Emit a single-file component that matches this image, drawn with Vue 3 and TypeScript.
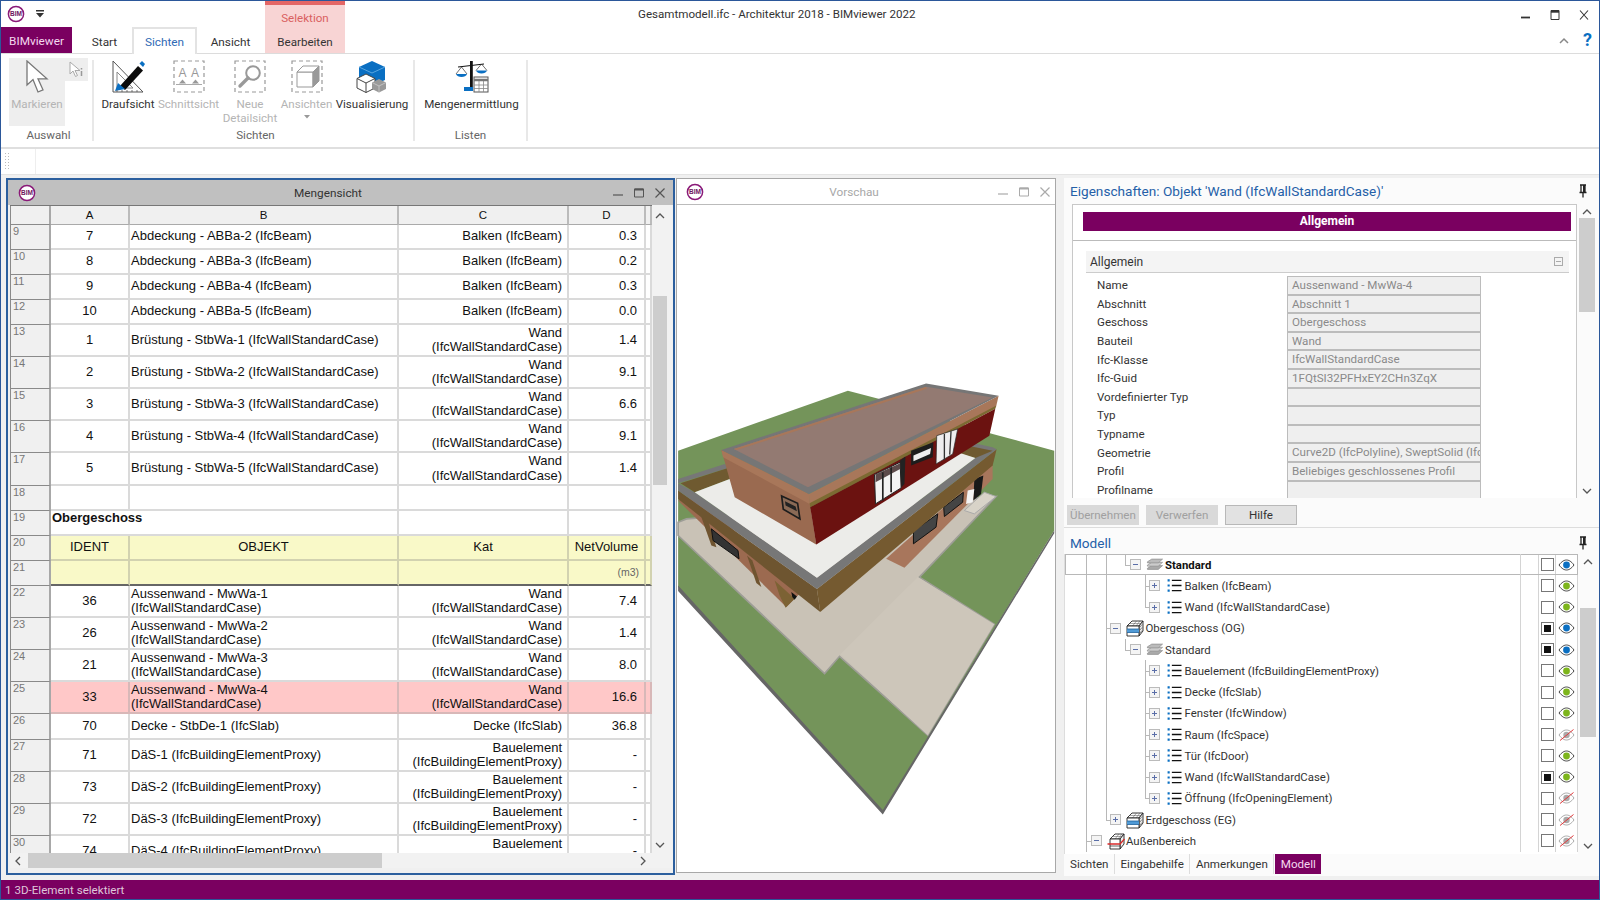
<script setup lang="ts">
interface SheetRow {
  n: number;
  a?: string;
  b?: string;
  c?: string;
  d?: string;
  h: number;
  kind?: "title" | "yellow" | "unit" | "hit";
}

interface TreeRow {
  depth: number;
  label: string;
  icon: "layer" | "list" | "storey" | "site";
  open?: boolean;
  bold?: boolean;
  selected?: boolean;
  checked?: boolean;
  eye: "blue" | "green" | "off";
  last?: boolean;
}

const wandC = "Wand\n(IfcWallStandardCase)";
const proxyC = "Bauelement\n(IfcBuildingElementProxy)";

const sheetRows: SheetRow[] = [
  { n: 9, a: "7", b: "Abdeckung - ABBa-2 (IfcBeam)", c: "Balken (IfcBeam)", d: "0.3", h: 25 },
  { n: 10, a: "8", b: "Abdeckung - ABBa-3 (IfcBeam)", c: "Balken (IfcBeam)", d: "0.2", h: 25 },
  { n: 11, a: "9", b: "Abdeckung - ABBa-4 (IfcBeam)", c: "Balken (IfcBeam)", d: "0.3", h: 25 },
  { n: 12, a: "10", b: "Abdeckung - ABBa-5 (IfcBeam)", c: "Balken (IfcBeam)", d: "0.0", h: 25 },
  { n: 13, a: "1", b: "Brüstung - StbWa-1 (IfcWallStandardCase)", c: wandC, d: "1.4", h: 32 },
  { n: 14, a: "2", b: "Brüstung - StbWa-2 (IfcWallStandardCase)", c: wandC, d: "9.1", h: 32 },
  { n: 15, a: "3", b: "Brüstung - StbWa-3 (IfcWallStandardCase)", c: wandC, d: "6.6", h: 32 },
  { n: 16, a: "4", b: "Brüstung - StbWa-4 (IfcWallStandardCase)", c: wandC, d: "9.1", h: 32 },
  { n: 17, a: "5", b: "Brüstung - StbWa-5 (IfcWallStandardCase)", c: wandC, d: "1.4", h: 33 },
  { n: 18, h: 25 },
  { n: 19, a: "Obergeschoss", h: 25, kind: "title" },
  { n: 20, a: "IDENT", b: "OBJEKT", c: "Kat", d: "NetVolume", h: 25, kind: "yellow" },
  { n: 21, d: "(m3)", h: 25, kind: "unit" },
  { n: 22, a: "36", b: "Aussenwand - MwWa-1\n(IfcWallStandardCase)", c: wandC, d: "7.4", h: 32 },
  { n: 23, a: "26", b: "Aussenwand - MwWa-2\n(IfcWallStandardCase)", c: wandC, d: "1.4", h: 32 },
  { n: 24, a: "21", b: "Aussenwand - MwWa-3\n(IfcWallStandardCase)", c: wandC, d: "8.0", h: 32 },
  { n: 25, a: "33", b: "Aussenwand - MwWa-4\n(IfcWallStandardCase)", c: wandC, d: "16.6", h: 32, kind: "hit" },
  { n: 26, a: "70", b: "Decke - StbDe-1 (IfcSlab)", c: "Decke (IfcSlab)", d: "36.8", h: 26 },
  { n: 27, a: "71", b: "DäS-1 (IfcBuildingElementProxy)", c: proxyC, d: "-", h: 32 },
  { n: 28, a: "73", b: "DäS-2 (IfcBuildingElementProxy)", c: proxyC, d: "-", h: 32 },
  { n: 29, a: "72", b: "DäS-3 (IfcBuildingElementProxy)", c: proxyC, d: "-", h: 32 },
  { n: 30, a: "74", b: "DäS-4 (IfcBuildingElementProxy)", c: proxyC, d: "-", h: 32 },
];

const props: [string, string][] = [
  ["Name", "Aussenwand - MwWa-4"],
  ["Abschnitt", "Abschnitt 1"],
  ["Geschoss", "Obergeschoss"],
  ["Bauteil", "Wand"],
  ["Ifc-Klasse", "IfcWallStandardCase"],
  ["Ifc-Guid", "1FQtSI32PFHxEY2CHn3ZqX"],
  ["Vordefinierter Typ", ""],
  ["Typ", ""],
  ["Typname", ""],
  ["Geometrie", "Curve2D (IfcPolyline), SweptSolid (IfcExtrudedAreaSolid)"],
  ["Profil", "Beliebiges geschlossenes Profil"],
  ["Profilname", ""],
];

const treeRows: TreeRow[] = [
  { depth: 2, label: "Standard", icon: "layer", open: true, bold: true, selected: true, eye: "blue", last: true },
  { depth: 3, label: "Balken (IfcBeam)", icon: "list", eye: "green" },
  { depth: 3, label: "Wand (IfcWallStandardCase)", icon: "list", eye: "green", last: true },
  { depth: 1, label: "Obergeschoss (OG)", icon: "storey", open: true, checked: true, eye: "blue" },
  { depth: 2, label: "Standard", icon: "layer", open: true, checked: true, eye: "blue", last: true },
  { depth: 3, label: "Bauelement (IfcBuildingElementProxy)", icon: "list", eye: "green" },
  { depth: 3, label: "Decke (IfcSlab)", icon: "list", eye: "green" },
  { depth: 3, label: "Fenster (IfcWindow)", icon: "list", eye: "green" },
  { depth: 3, label: "Raum (IfcSpace)", icon: "list", eye: "off" },
  { depth: 3, label: "Tür (IfcDoor)", icon: "list", eye: "green" },
  { depth: 3, label: "Wand (IfcWallStandardCase)", icon: "list", checked: true, eye: "green" },
  { depth: 3, label: "Öffnung (IfcOpeningElement)", icon: "list", eye: "off", last: true },
  { depth: 1, label: "Erdgeschoss (EG)", icon: "storey", eye: "off", last: true },
  { depth: 0, label: "Außenbereich", icon: "site", open: true, eye: "off" },
];

const levelX = (level: number) => 21 + level * 19.5;
const guides = (depth: number) => (depth === 0 ? [] : depth === 1 ? [0] : [0, 1]);
const eyeColor: Record<string, string> = { blue: "#0a6fc2", green: "#7db51c" };
</script>

<template>
  <div class="app">
    <svg class="defs" aria-hidden="true">
      <symbol id="bim" viewBox="0 0 18 18">
        <circle cx="9" cy="9" r="7.6" fill="#fff" stroke="#8a1a78" stroke-width="1.5" />
        <text x="9" y="11.3" text-anchor="middle" font-size="6.5" font-weight="700" font-family="Liberation Sans, sans-serif" fill="#6d1560">BIM</text>
      </symbol>
      <symbol id="pin" viewBox="0 0 12 14">
        <path d="M3 1h6M4 1v7M8 1v7M2.5 8.5h7M6 9v4.5" fill="none" stroke="#222" stroke-width="1.3" />
        <rect x="6" y="1" width="2" height="7" fill="#222" />
      </symbol>
      <symbol id="eye" viewBox="0 0 17 12">
        <path d="M1 6C4 2 6.500 1 8.500 1S13 2 16 6c-3 4-5.500 5-7.500 5S4 10 1 6Z" fill="#fff" stroke="#444" stroke-width="1" />
        <circle cx="8.500" cy="6" r="3.400" fill="currentColor" />
      </symbol>
      <symbol id="eye-off" viewBox="0 0 17 12">
        <path d="M1 6C4 2 6.500 1 8.500 1S13 2 16 6c-3 4-5.500 5-7.500 5S4 10 1 6Z" fill="#fff" stroke="#aaa" stroke-width="1" />
        <circle cx="8.500" cy="6" r="3.200" fill="#aaa" />
        <path d="M2 11.500 15.500 .5" stroke="#e0383a" stroke-width="1" />
      </symbol>
      <symbol id="list" viewBox="0 0 14 14">
        <path d="M1 1.200h2v2H1zM1 6h2v2H1zM1 10.800h2v2H1z" fill="#0a6fc2" />
        <path d="M5 2.200h9M5 7h9M5 11.800h9" stroke="#111" stroke-width="1.300" />
      </symbol>
      <symbol id="layer" viewBox="0 0 16 12">
        <path d="M1 9.500 5 7h10l-4 3.500H1Z" fill="#aaa" stroke="#888" stroke-width=".6" />
        <path d="M1 6.500 5 4h10l-4 3.500H1Z" fill="#ccc" stroke="#888" stroke-width=".6" />
        <path d="M1 3.500 5 1h10l-4 3.500H1Z" fill="#bbb" stroke="#888" stroke-width=".6" />
      </symbol>
      <symbol id="storey" viewBox="0 0 18 18">
        <path d="M1 7 6 2h11l-4 5Z" fill="#fff" stroke="#222" stroke-width=".9" />
        <path d="M3.500 4.500h11M6.500 7l4-5M10 7l4-5" stroke="#555" stroke-width=".5" />
        <path d="M13 7l4-5v10l-4 5Z" fill="#eee" stroke="#222" stroke-width=".9" />
        <path d="M14 8l2-2.500M14 11l2-2.500M14 14l2-2.500" stroke="#444" stroke-width=".6" />
        <path d="M1 7h12v10H1Z" fill="#fff" stroke="#222" stroke-width=".9" />
        <path d="M1 10h12v3.500H1Z" fill="#4f9ad6" />
        <path d="M1 10h12M1 13.500h12" stroke="#1d5f9a" stroke-width=".8" />
      </symbol>
      <symbol id="site" viewBox="0 0 18 18">
        <path d="M3 7 8 2h9l-4 5Z" fill="#fff" stroke="#222" stroke-width=".9" />
        <path d="M5.500 4.500h9M8 7l4-5M11 7l4-5" stroke="#555" stroke-width=".5" />
        <path d="M13 7l4-5v10l-4 5Z" fill="#eee" stroke="#222" stroke-width=".9" />
        <path d="M3 7h10v10H3Z" fill="#fff" stroke="#222" stroke-width=".9" />
        <path d="M3 14h10" stroke="#222" stroke-width=".7" />
        <path d="M.5 12H13l4.500-5" fill="none" stroke="#d92b2b" stroke-width="1.300" />
      </symbol>
    </svg>

    <header class="head">
      <div class="qat">
        <svg class="logo"><use href="#bim" /></svg>
        <svg class="qat-arrow" viewBox="0 0 10 8"><path d="M1 0h8v1.500H1zM1 3h8L5 7.500Z" fill="#333" /></svg>
      </div>
      <div class="context">
        <span class="context-name">Selektion</span>
        <span class="context-tab">Bearbeiten</span>
      </div>
      <div class="title-row">
        <span class="app-title">Gesamtmodell.ifc - Architektur 2018 - BIMviewer 2022</span>
        <div class="win-controls">
          <svg viewBox="0 0 12 12"><path d="M1 8.500h9" stroke="#333" stroke-width="1.800" /></svg>
          <svg viewBox="0 0 12 12"><path d="M2 1.500h8v9H2z" fill="none" stroke="#333" stroke-width="1" /><path d="M2 2.500h8" stroke="#333" stroke-width="2.400" /></svg>
          <svg viewBox="0 0 12 12"><path d="m2 1.500 8 9M10 1.500l-8 9" stroke="#333" stroke-width="1.100" /></svg>
        </div>
      </div>
      <nav class="tabs">
        <span class="tab app-tab">BIMviewer</span>
        <span class="tab start">Start</span>
        <span class="tab active">Sichten</span>
        <span class="tab ansicht">Ansicht</span>
      </nav>
      <div class="tabs-right">
        <svg class="collapse" viewBox="0 0 10 7"><path d="m1 6 4-4 4 4" fill="none" stroke="#888" stroke-width="1.500" /></svg>
        <span class="help">?</span>
      </div>
    </header>

    <section class="ribbon">
      <div class="group g-auswahl">
        <div class="g-items">
          <div class="marker big-off">
            <svg class="cursor" viewBox="0 0 24 34"><path d="M2 1v24l6-5.500L13 32l5-2.200-5-11h9Z" fill="#fff" stroke="#777" stroke-width="1.300" /></svg>
            <span class="lbl off">Markieren</span>
          </div>
          <div class="marker-small">
            <svg viewBox="0 0 16 17"><path d="M1 1v12l3-3 2.500 5.500 2-1-2.500-5H11Z" fill="#fff" stroke="#aaa" /><path d="M12.500 7v1.500M12.500 10v5" stroke="#999" stroke-width="1.500" /></svg>
          </div>
        </div>
        <span class="g-label">Auswahl</span>
      </div>

      <div class="group g-sichten">
        <div class="g-items">
          <div class="rb w-drauf">
            <svg class="rb-icon" viewBox="0 0 32 33">
              <path d="M1 1v31h30Z" fill="#fff" stroke="#555" stroke-width="1" />
              <path d="M5 12v16h16Z" fill="none" stroke="#888" stroke-width="1" />
              <path d="M8 26 26 6l5 4.500L13 30Z" fill="#0b0b0b" />
              <path d="M27.500 3.500 30 1l3 3-2 3Z" fill="#0a6fc2" />
              <path d="M3 31l3-8 7 6Z" fill="#0a6fc2" />
              <path d="M5 32v-2M10 32v-2M15 32v-2M20 32v-2M25 32v-2" stroke="#555" stroke-width=".8" />
            </svg>
            <span class="lbl">Draufsicht</span>
          </div>
          <div class="rb w-schnitt">
            <svg class="rb-icon" viewBox="0 0 32 33">
              <rect x="1" y="1" width="30" height="31" fill="none" stroke="#999" stroke-width="1.200" stroke-dasharray="4 3" />
              <text x="9.500" y="17" text-anchor="middle" font-size="12" fill="#999" font-family="Liberation Sans, sans-serif">A</text>
              <text x="22" y="17" text-anchor="middle" font-size="12" fill="#999" font-family="Liberation Sans, sans-serif">A</text>
              <path d="M6 23.500h7l-3.500-4ZM19 23.500h7l-3.500-4Z" fill="#999" />
              <path d="M3 24.500h26" stroke="#aaa" stroke-width="1" />
            </svg>
            <span class="lbl off">Schnittsicht</span>
          </div>
          <div class="rb w-neue">
            <svg class="rb-icon" viewBox="0 0 32 33">
              <rect x="1" y="1" width="30" height="31" fill="none" stroke="#999" stroke-width="1.200" stroke-dasharray="4 3" />
              <circle cx="19" cy="13" r="6.800" fill="#fff" stroke="#999" stroke-width="2" />
              <path d="m14 18-8 8" stroke="#999" stroke-width="3.400" stroke-linecap="round" />
            </svg>
            <span class="lbl off">Neue<br />Detailsicht</span>
          </div>
          <div class="rb w-ans">
            <svg class="rb-icon" viewBox="0 0 32 33">
              <rect x="1" y="1" width="30" height="31" fill="none" stroke="#999" stroke-width="1.200" stroke-dasharray="4 3" />
              <path d="M6 12h16v15H6Z" fill="#fff" stroke="#999" />
              <path d="M6 12l6-6h16l-6 6Z" fill="#fff" stroke="#999" />
              <path d="M22 12l6-6v15l-6 6Z" fill="#999" stroke="#999" />
            </svg>
            <span class="lbl off">Ansichten</span>
            <svg class="drop" viewBox="0 0 8 5"><path d="M1 1h6L4 4.500Z" fill="#999" /></svg>
          </div>
          <div class="rb w-vis">
            <svg class="rb-icon" viewBox="0 0 32 33">
              <path d="M16 1 29 7v13l-13 6-13-6V7Z" fill="#0a6fc2" />
              <path d="M3 7l13 6 13-6" fill="none" stroke="#5aa6e0" stroke-width="1" />
              <path d="M9 14l9 4.500v9.500l-9 4.500-9-4.500V18.500Z" transform="translate(1 0)" fill="#fff" stroke="#444" stroke-width="1" />
              <path d="M1 18.500l9 4.500 9-4.500M10 23v9.500" fill="none" stroke="#444" stroke-width="1" />
              <path d="M23 19l7 3.500V29l-7 3.500-7-3.500v-6.500Z" fill="#999" />
              <path d="M16 22.500l7 3.500 7-3.500M23 26v6.500" fill="none" stroke="#ccc" stroke-width=".8" />
            </svg>
            <span class="lbl">Visualisierung</span>
          </div>
        </div>
        <span class="g-label">Sichten</span>
      </div>

      <div class="group g-listen">
        <div class="g-items">
          <div class="rb w-menge">
            <svg class="rb-icon wide" viewBox="0 0 34 33">
              <path d="M3 7 29 4" stroke="#111" stroke-width="1" />
              <path d="M15 1h2.800v26H15Z" fill="#111" />
              <path d="M1 14c1 4 10 4 11 0Z" fill="#0a6fc2" />
              <path d="M21 10.500c1 4 10 4 11 0Z" fill="#0a6fc2" />
              <path d="M6.500 7 1 14M6.500 7l5.500 7M26.500 4 21 10.500M26.500 4l5.500 6.500" stroke="#333" stroke-width=".7" fill="none" />
              <path d="M9 27h9v4H9Z" fill="#0a6fc2" />
              <rect x="19" y="17" width="14" height="15" fill="#fff" stroke="#555" />
              <path d="M19 20h14" stroke="#777" stroke-width="2.500" />
              <path d="M19 25h14M19 28.500h14M24 21v11M28.500 21v11" stroke="#888" stroke-width=".8" />
            </svg>
            <span class="lbl">Mengenermittlung</span>
          </div>
        </div>
        <span class="g-label">Listen</span>
      </div>
    </section>

    <div class="toolstrip">
      <div class="grip"></div>
    </div>

    <main class="workspace">
      <section class="doc active-doc">
        <div class="doc-title">
          <svg class="logo"><use href="#bim" /></svg>
          <span class="doc-name">Mengensicht</span>
          <div class="doc-controls">
            <svg viewBox="0 0 12 12"><path d="M1 8h10" stroke="#555" stroke-width="1.200" /></svg>
            <svg viewBox="0 0 12 12"><path d="M1.500 2h9v8h-9z" fill="none" stroke="#555" /><path d="M1.500 2.500h9" stroke="#555" stroke-width="2" /></svg>
            <svg viewBox="0 0 12 12"><path d="m1.500 1.500 9 9M10.500 1.500l-9 9" stroke="#555" stroke-width="1.200" /></svg>
          </div>
        </div>
        <div class="doc-body">
          <div class="sheet">
            <div class="s-row s-head">
              <div class="rn corner"></div>
              <div class="c ch">A</div>
              <div class="c ch">B</div>
              <div class="c ch">C</div>
              <div class="c ch">D</div>
              <div class="c ch"></div>
            </div>
            <div
              v-for="r in sheetRows"
              :key="r.n"
              class="s-row"
              :class="r.kind"
              :style="{ height: `${r.h}px` }"
            >
              <div class="rn">{{ r.n }}</div>
              <template v-if="r.kind === 'title'">
                <div class="c title-cell">{{ r.a }}</div>
                <div class="c"></div>
                <div class="c"></div>
                <div class="c"></div>
              </template>
              <template v-else>
                <div class="c ca">{{ r.a }}</div>
                <div class="c cb">{{ r.b }}</div>
                <div class="c cc">{{ r.c }}</div>
                <div class="c cd">{{ r.d }}</div>
                <div class="c"></div>
              </template>
            </div>
          </div>
          <div class="vscroll">
            <svg class="arr first" viewBox="0 0 10 7"><path d="m1 6 4-4 4 4" fill="none" stroke="#555" stroke-width="1.300" /></svg>
            <div class="vtrack"><div class="vthumb"></div></div>
            <svg class="arr" viewBox="0 0 10 7"><path d="m1 1 4 4 4-4" fill="none" stroke="#555" stroke-width="1.300" /></svg>
          </div>
        </div>
        <div class="hscroll">
          <svg class="harr" viewBox="0 0 7 10"><path d="M6 1 2 5l4 4" fill="none" stroke="#555" stroke-width="1.300" /></svg>
          <div class="hthumb"></div>
          <svg class="harr right" viewBox="0 0 7 10"><path d="m1 1 4 4-4 4" fill="none" stroke="#555" stroke-width="1.300" /></svg>
        </div>
      </section>

      <section class="doc preview">
        <div class="doc-title light">
          <svg class="logo"><use href="#bim" /></svg>
          <span class="doc-name">Vorschau</span>
          <div class="doc-controls dim">
            <svg viewBox="0 0 12 12"><path d="M1 8h10" stroke="#aaa" stroke-width="1.200" /></svg>
            <svg viewBox="0 0 12 12"><path d="M1.500 2h9v8h-9z" fill="none" stroke="#aaa" /><path d="M1.500 2.500h9" stroke="#aaa" stroke-width="2" /></svg>
            <svg viewBox="0 0 12 12"><path d="m1.500 1.500 9 9M10.500 1.500l-9 9" stroke="#aaa" stroke-width="1.200" /></svg>
          </div>
        </div>
        <svg class="model" viewBox="54 -438 1131 2004">
          <!-- ground -->
          <polygon points="55,300 565,120 660,145 1000,250 1185,300 1185,540 670,1385 55,710" fill="#74945a" />
          <polygon points="55,705 670,1380 1185,540 1185,548 670,1393 55,722" fill="#666" />
          <!-- paving -->
          <polygon points="55,515 80,505 1010,438 780,680 1005,822 805,1155 540,918 495,970 55,555" fill="#c9c2b6" stroke="#9d9d96" stroke-width="5" />
          <polygon points="542,912 775,680 1005,822 805,1155" fill="#cdc6ba" />
          <polygon points="915,480 975,425 1010,438 945,490" fill="#d8d3c8" stroke="#aaa" stroke-width="3" />
          <!-- ground floor walls -->
          <polygon points="55,450 380,770 420,730 120,440" fill="#9c6a50" />
          <polygon points="125,500 140,495 170,590 155,585" fill="#6f5430" />
          <polygon points="262,615 278,630 305,710 290,698" fill="#6f5430" />
          <polygon points="345,690 405,745 378,772 360,735" fill="#7c6234" />
          <polygon points="395,725 412,738 405,748 398,740" fill="#111" />
          <polygon points="680,625 735,652 1000,385 1000,340" fill="#a8765c" />
          <polygon points="155,535 235,600 238,625 160,570" fill="#333" stroke="#111" stroke-width="3" />
          <polygon points="762,542 835,490 830,530 762,580" fill="#444" stroke="#111" stroke-width="3" />
          <polygon points="853,470 912,425 910,455 855,498" fill="#444" stroke="#111" stroke-width="3" />
          <polygon points="945,385 972,375 965,430 942,450" fill="#191919" />
          <polygon points="925,420 945,415 940,455 920,460" fill="#f3f3f3" />
          <!-- parapet -->
          <polygon points="55,420 472,716 482,785 55,445" fill="#6e5530" />
          <polygon points="472,716 1012,296 1000,345 482,785" fill="#755a30" />
          <polygon points="55,398 55,420 472,716 1012,296 1000,290 900,268 895,280 948,322 472,682 105,425" fill="#777" />
          <polygon points="55,385 195,340 205,352 55,398" fill="#777" />
          <polygon points="62,398 205,352 210,385 105,425" fill="#6f5a30" />
          <polygon points="900,280 1000,300 948,322 890,305" fill="#6f5a30" />
          <polygon points="105,425 210,385 470,582 895,305 948,322 472,682" fill="#ecece9" />
          <!-- upper floor -->
          <polygon points="185,298 448,430 452,468 470,582 225,440" fill="#9a6a50" />
          <polygon points="185,298 448,430 450,460 190,320" fill="#a8775a" />
          <polygon points="448,430 1018,135 1010,170 450,462" fill="#a8775a" />
          <polygon points="450,458 1010,165 1008,174 452,470" fill="#7c6a32" />
          <polygon points="452,470 1008,174 990,255 470,582" fill="#6b1210" />
          <polygon points="185,298 800,98 1018,135 448,430" fill="#767676" />
          <polygon points="222,295 800,108 1000,140 445,410" fill="#937a72" />
          <polygon points="222,295 800,108 802,114 232,298" fill="#a8775a" />
          <polygon points="366,436 414,458 421,505 371,476" fill="#8a6a56" stroke="#1d1d1d" stroke-width="5" />
          <polygon points="376,452 408,468 412,482 378,465" fill="#222" />
          <!-- terrace doors -->
          <polygon points="645,372 722,335 725,412 648,460" fill="#f2f2f2" stroke="#222" stroke-width="3" />
          <polygon points="648,372 722,338 722,355 648,395" fill="#5c4a4a" />
          <path d="M670 365v85M695 350v75" stroke="#222" stroke-width="5" />
          <polygon points="722,330 738,318 735,400 726,410" fill="#222" />
          <polygon points="755,300 822,275 820,320 755,345" fill="#1d1d1d" />
          <polygon points="762,315 815,292 812,310 762,332" fill="#eee" />
          <polygon points="832,255 895,235 880,310 830,340" fill="#eee" stroke="#222" stroke-width="2" />
          <path d="M855 250v78M875 242l-4 70" stroke="#333" stroke-width="4" />
        </svg>
      </section>

      <aside class="side">
        <div class="pane-title">
          <span>Eigenschaften: Objekt 'Wand (IfcWallStandardCase)'</span>
          <svg class="pin"><use href="#pin" /></svg>
        </div>
        <div class="props">
          <div class="props-box">
            <div class="cat-head"><div class="cat-bar">Allgemein</div></div>
            <div class="sec-head">
              <span>Allgemein</span>
              <span class="sec-min"></span>
            </div>
            <div v-for="p in props" :key="p[0]" class="prop">
              <span class="p-name">{{ p[0] }}</span>
              <span class="p-val">{{ p[1] }}</span>
            </div>
          </div>
          <div class="pscroll">
            <svg class="arr" viewBox="0 0 10 7"><path d="m1 6 4-4 4 4" fill="none" stroke="#555" stroke-width="1.300" /></svg>
            <div class="ptrack"><div class="pthumb"></div></div>
            <svg class="arr" viewBox="0 0 10 7"><path d="m1 1 4 4 4-4" fill="none" stroke="#555" stroke-width="1.300" /></svg>
          </div>
        </div>
        <div class="btn-row">
          <button class="btn dis">Übernehmen</button>
          <button class="btn dis">Verwerfen</button>
          <button class="btn">Hilfe</button>
        </div>
        <div class="pane-title modell">
          <span>Modell</span>
          <svg class="pin"><use href="#pin" /></svg>
        </div>
        <div class="tree">
          <div class="tree-rows">
            <div
              v-for="(t, i) in treeRows"
              :key="i"
              class="t-row"
              :class="{ selected: t.selected }"
            >
              <div class="t-main" :style="{ paddingLeft: `${25.5 + t.depth * 19.5}px` }">
                <i v-for="g in guides(t.depth)" :key="g" class="guide" :style="{ left: `${levelX(g)}px` }"></i>
                <i v-if="!t.last" class="guide" :style="{ left: `${levelX(t.depth)}px` }"></i>
                <i class="elbow" :style="{ left: `${levelX(t.depth)}px` }"></i>
                <span class="exp" :class="{ open: t.open }"></span>
                <svg class="t-icon" :class="t.icon"><use :href="`#${t.icon}`" /></svg>
                <span class="t-label" :class="{ bold: t.bold }">{{ t.label }}</span>
              </div>
              <div class="t-gap"></div>
              <div class="t-check">
                <span class="box" :class="{ on: t.checked }"></span>
              </div>
              <div class="t-eye">
                <svg v-if="t.eye === 'off'" class="eye"><use href="#eye-off" /></svg>
                <svg v-else class="eye" :style="{ color: eyeColor[t.eye] }"><use href="#eye" /></svg>
              </div>
            </div>
          </div>
          <div class="tscroll">
            <svg class="arr" viewBox="0 0 10 7"><path d="m1 6 4-4 4 4" fill="none" stroke="#555" stroke-width="1.300" /></svg>
            <div class="ttrack"><div class="tthumb"></div></div>
            <svg class="arr" viewBox="0 0 10 7"><path d="m1 1 4 4 4-4" fill="none" stroke="#555" stroke-width="1.300" /></svg>
          </div>
        </div>
        <div class="pane-tabs">
          <span class="ptab">Sichten</span>
          <span class="ptab">Eingabehilfe</span>
          <span class="ptab">Anmerkungen</span>
          <span class="ptab on">Modell</span>
        </div>
      </aside>
    </main>

    <footer class="status">1 3D-Element selektiert</footer>
  </div>
</template>

<style>
html,
body {
  margin: 0;
  background: #fff;
  overflow: hidden;
}
</style>

<style scoped>
.app {
  width: 1600px;
  height: 900px;
  box-sizing: border-box;
  display: flex;
  flex-direction: column;
  border: 1px solid #2b579a;
  border-width: 1px 1px 0;
  font-family: Roboto, sans-serif;
  font-size: 11.6px;
  color: #333;
  background: #fff;
}
.defs {
  position: absolute;
  width: 0;
  height: 0;
}

/* title + tabs */
.head {
  display: grid;
  grid-template-columns: 264px 80px 1fr;
  grid-template-rows: 26px 26px;
  height: 53px;
  box-sizing: border-box;
  border-bottom: 1px solid #dcdcdc;
}
.qat {
  display: flex;
  align-items: center;
  padding-left: 6px;
  gap: 10px;
}
.logo {
  width: 18px;
  height: 18px;
  flex: none;
}
.qat-arrow {
  width: 10px;
  height: 8px;
}
.context {
  grid-column: 2;
  grid-row: 1 / 3;
  background: #f8d4d4;
  border-top: 4px solid #e46666;
  display: flex;
  flex-direction: column;
  align-items: center;
  height: 52px;
  box-sizing: border-box;
}
.context-name {
  color: #d9605f;
  line-height: 22px;
  height: 22px;
  padding-top: 2px;
}
.context-tab {
  line-height: 24px;
  margin-top: 1px;
}
.title-row {
  display: flex;
  align-items: center;
  padding-left: 293px;
  padding-bottom: 1px;
}
.app-title {
  font-size: 11.6px;
  color: #333;
}
.win-controls {
  margin-left: auto;
  display: flex;
  gap: 17px;
  padding-right: 9px;
  padding-top: 2px;
}
.win-controls svg {
  width: 12px;
  height: 12px;
}
.tabs {
  grid-column: 1;
  grid-row: 2;
  display: flex;
  height: 27px;
}
.tab {
  display: flex;
  align-items: center;
  justify-content: center;
  font-size: 11.8px;
  box-sizing: border-box;
  padding-top: 2px;
}
.app-tab {
  width: 71px;
  background: #7a0060;
  color: #f4d9ef;
  height: 26px;
}
.start {
  width: 60px;
  padding-left: 5px;
}
.active {
  width: 65px;
  color: #2f6ab5;
  background: #fff;
  border: 2px solid #e3e3e3;
  border-bottom: 0;
  padding-top: 0;
}
.ansicht {
  width: 67px;
}
.tabs-right {
  grid-column: 3;
  grid-row: 2;
  display: flex;
  align-items: center;
  justify-content: flex-end;
  padding-right: 7px;
  gap: 14px;
}
.collapse {
  width: 10px;
  height: 7px;
}
.help {
  color: #0a6fc2;
  font-size: 18px;
  font-weight: 700;
  line-height: 18px;
}

/* ribbon */
.ribbon {
  display: flex;
  height: 95px;
  box-sizing: border-box;
  border-bottom: 2px solid #dfdfdf;
  padding: 6px 0 6px 0;
  flex: none;
}
.group {
  display: flex;
  flex-direction: column;
  align-items: center;
  box-sizing: border-box;
  border-right: 2px solid #e8e8e8;
}
.g-auswahl {
  width: 93px;
  padding-left: 8px;
}
.g-sichten {
  width: 321px;
  padding-left: 4px;
}
.g-listen {
  width: 113px;
}
.g-items {
  display: flex;
  flex: 1;
  margin-top: -2px;
  align-self: flex-start;
}
.g-label {
  line-height: 14px;
  margin-bottom: -1px;
  color: #666;
}
.g-auswahl .g-label {
  margin-right: 4px;
}
.marker {
  width: 56px;
  height: 68px;
  background: #eeeeee;
  display: flex;
  flex-direction: column;
  align-items: center;
}
.cursor {
  width: 24px;
  height: 34px;
  margin-top: 2px;
  margin-bottom: 3px;
}
.marker-small {
  width: 23px;
  height: 23px;
  background: #eeeeee;
  display: flex;
  align-items: center;
  justify-content: center;
}
.marker-small svg {
  width: 16px;
  height: 17px;
}
.rb {
  display: flex;
  flex-direction: column;
  align-items: center;
  padding-top: 2px;
  box-sizing: border-box;
}
.rb-icon {
  width: 32px;
  height: 33px;
  margin-bottom: 4px;
  overflow: visible;
}
.rb-icon.wide {
  width: 34px;
}
.lbl {
  line-height: 14px;
  font-size: 11.6px;
  text-align: center;
  white-space: nowrap;
  color: #333;
}
.lbl.off {
  color: #b4b4b4;
}
.drop {
  width: 8px;
  height: 5px;
  margin-top: 3px;
}
.w-drauf {
  width: 60px;
}
.w-schnitt {
  width: 61px;
}
.w-neue {
  width: 62px;
}
.w-ans {
  width: 51px;
}
.w-vis {
  width: 80px;
}
.w-menge {
  width: 113px;
}

.toolstrip {
  height: 26px;
  flex: none;
  display: flex;
  border-bottom: 1px solid #e4e4e4;
  box-sizing: border-box;
}
.grip {
  width: 35px;
  box-sizing: border-box;
  border-right: 1px solid #eee;
  background-image: radial-gradient(#bbb 0.7px, transparent 0.8px);
  background-size: 3px 3px;
  background-repeat: repeat;
  background-clip: content-box;
  padding: 4px 25px 3px 4px;
}

/* documents */
.workspace {
  flex: 1;
  min-height: 0;
  display: flex;
  padding: 3px 0 0 5px;
  background: #f0f0f0;
}
.doc {
  display: flex;
  flex-direction: column;
  box-sizing: border-box;
  background: #f0f0f0;
}
.active-doc {
  width: 669px;
  height: 697px;
  border: 2px solid #2c5f9e;
}
.preview {
  width: 380px;
  height: 695px;
  margin-left: 1px;
  border: 1px solid #a8a8a8;
  background: #fff;
}
.doc-title {
  display: flex;
  align-items: center;
  height: 25px;
  flex: none;
  background: #c0c0c0;
  padding-left: 8px;
  color: #333;
  border-left: 2px solid #c0c0c0;
}
.doc-title.light {
  background: #fff;
  color: #a8a8a8;
  border-left: 0;
  border-bottom: 1px solid #bbb;
  padding-left: 9px;
}
.doc-name {
  flex: 1;
  text-align: center;
  font-size: 11.8px;
  margin-right: -8px;
}
.light .doc-name {
  margin-right: -7px;
}
.doc-controls {
  display: flex;
  gap: 9px;
  padding-right: 7px;
}
.dim {
  padding-right: 4px;
}
.doc-controls svg {
  width: 12px;
  height: 12px;
}
.doc-body {
  flex: 1;
  min-height: 0;
  display: flex;
  padding-left: 2px;
}
.sheet {
  width: 642px;
  overflow: hidden;
  background: #fff;
  border-top: 1px solid #777;
  box-sizing: border-box;
  font-family: "Liberation Sans", Arial, sans-serif;
  font-size: 13px;
  color: #111;
}
.s-row {
  display: grid;
  grid-template-columns: 41px 79px 269px 170px 77px 6px;
  line-height: 14.5px;
}
.s-head {
  height: 19px;
  font-size: 11px;
}
.rn {
  background: #f0f0f0;
  border-right: 2px solid #a8a8a8;
  border-bottom: 1px solid #8a8a8a;
  border-left: 1px solid #8a8a8a;
  box-sizing: border-box;
  font-size: 11px;
  line-height: 12px;
  color: #777;
  padding-left: 2px;
  overflow: hidden;
}
.corner {
  background: #f0f0f0;
}
.c {
  box-sizing: border-box;
  border-right: 2px solid #dadada;
  border-bottom: 2px solid #dadada;
  display: flex;
  align-items: center;
  white-space: pre-line;
  overflow: hidden;
}
.ch {
  background: #f0f0f0;
  justify-content: center;
  border-right-color: #bbb;
  border-bottom-color: #aaa;
  border-bottom-width: 1px;
  font-size: 11.5px;
}
.ca {
  justify-content: center;
}
.cb {
  padding-left: 1px;
}
.cc {
  justify-content: flex-end;
  text-align: right;
  padding-right: 5px;
}
.cd {
  justify-content: flex-end;
  padding-right: 7px;
}
.title-cell {
  grid-column: span 2;
  font-weight: 700;
  padding-left: 1px;
  padding-bottom: 8px;
}
.yellow .c,
.unit .c {
  background: #f9f9c8;
  border-color: #d2d2b0;
}
.yellow .cb,
.yellow .cc,
.yellow .cd {
  justify-content: center;
  padding: 0;
}
.unit .c {
  border-bottom: 2px solid #666;
}
.unit .cd {
  font-size: 10.5px;
  color: #666;
  padding-right: 5px;
}
.hit .c {
  background: #ffc8c8;
  border-color: #d8b8b8;
}
.vscroll {
  width: 20px;
  box-sizing: border-box;
  padding-right: 4px;
  display: flex;
  flex-direction: column;
  align-items: center;
  background: #f2f2f2;
}
.arr {
  width: 10px;
  height: 7px;
  flex: none;
  margin: 4px 0;
}
.arr.first {
  margin-top: 7px;
}
.vtrack {
  flex: 1;
  width: 100%;
  padding: 73px 1px 0;
  box-sizing: border-box;
}
.vthumb {
  height: 189px;
  background: #cdcdcd;
}
.hscroll {
  height: 15px;
  flex: none;
  display: flex;
  align-items: center;
  margin: 0 0 5px 2px;
  background: #f2f2f2;
}
.harr {
  width: 7px;
  height: 10px;
  margin: 0 7px 0 4px;
  flex: none;
}
.hthumb {
  width: 354px;
  height: 100%;
  background: #cdcdcd;
}
.harr.right {
  margin: 0 0 0 258px;
}
.model {
  flex: 1;
  min-height: 0;
  width: 100%;
}

/* right side */
.side {
  flex: 1;
  min-width: 0;
  margin-left: 8px;
  margin-bottom: 4px;
  display: flex;
  flex-direction: column;
  background: #fbfbfb;
}
.pane-title {
  height: 26px;
  flex: none;
  display: flex;
  align-items: center;
  justify-content: space-between;
  padding: 0 10px 1px 6px;
  box-sizing: border-box;
  font-size: 13.6px;
  color: #2560a8;
}
.pin {
  width: 12px;
  height: 14px;
}
.props {
  height: 294px;
  flex: none;
  display: flex;
  overflow: hidden;
}
.props-box {
  width: 505px;
  margin-left: 8px;
  box-sizing: border-box;
  border: 1px solid #c8c8c8;
  border-bottom: 0;
  background: #fff;
  overflow: hidden;
}
.cat-head {
  height: 36px;
  box-sizing: border-box;
  padding: 7px 5px 0 10px;
  border-bottom: 1px solid #bbb;
}
.cat-bar {
  height: 19px;
  background: #7a0060;
  color: #fff;
  font-weight: 700;
  font-size: 12px;
  text-align: center;
  line-height: 18px;
}
.sec-head {
  height: 21px;
  margin: 10px 7px 3px 13px;
  background: #f4f4f4;
  border-bottom: 1px solid #ccc;
  display: flex;
  justify-content: space-between;
  align-items: center;
  padding: 0 6px 0 4px;
  font-size: 12px;
}
.sec-min {
  width: 7px;
  height: 7px;
  border: 1px solid #aaa;
  background: linear-gradient(#aaa, #aaa) center / 5px 1px no-repeat;
}
.prop {
  display: flex;
  height: 18.600px;
  align-items: center;
  padding-left: 24px;
}
.p-name {
  width: 190px;
  flex: none;
  white-space: nowrap;
  color: #333;
}
.p-val {
  width: 194px;
  height: 100%;
  flex: none;
  box-sizing: border-box;
  background: #efefef;
  border: 1px solid #bcbcbc;
  border-top-width: 1px;
  color: #8a8a8a;
  padding-left: 4px;
  line-height: 16px;
  white-space: nowrap;
  overflow: hidden;
}
.pscroll,
.tscroll {
  width: 16px;
  margin-left: 2px;
  display: flex;
  flex-direction: column;
  align-items: center;
}
.pscroll .arr {
  margin: 4px 0 3px;
}
.ptrack,
.ttrack {
  flex: 1;
  width: 100%;
}
.pthumb {
  margin-top: 0;
  height: 94px;
  background: #cdcdcd;
}
.tthumb {
  margin-top: 39px;
  height: 129px;
  background: #cdcdcd;
}
.btn-row {
  height: 30px;
  flex: none;
  box-sizing: border-box;
  padding: 7px 0 3px 3px;
  display: flex;
  gap: 7px;
  border-bottom: 1px solid #ddd;
}
.btn {
  width: 72px;
  height: 20px;
  padding: 0;
  font: inherit;
  background: #e2e2e2;
  border: 1px solid #b8b8b8;
  color: #333;
}
.btn.dis {
  background: #d9d9d9;
  border-color: #d9d9d9;
  color: #a0a0a0;
}
.modell {
  height: 26px;
  padding-bottom: 0;
  padding-top: 4px;
}
.tree {
  flex: 1;
  min-height: 0;
  display: flex;
  overflow: hidden;
}
.tree-rows {
  width: 514px;
  background: #fff;
  font-size: 11.4px;
  overflow: hidden;
  border-left: 1px solid #ddd;
  box-sizing: border-box;
}
.t-row {
  display: flex;
  height: 21.250px;
  box-sizing: border-box;
}
.t-row.selected {
  outline: 1px solid #b8b8b8;
  outline-offset: -1px;
}
.t-main {
  position: relative;
  width: 456px;
  box-sizing: border-box;
  display: flex;
  align-items: center;
  border-right: 1px solid #d4d4d4;
}
.guide {
  position: absolute;
  top: 0;
  bottom: 0;
  width: 0;
  border-left: 1px solid #b8b8b8;
}
.elbow {
  position: absolute;
  top: 0;
  height: 50%;
  width: 4px;
  border-left: 1px solid #b8b8b8;
  border-bottom: 1px solid #b8b8b8;
}
.exp {
  width: 9px;
  height: 9px;
  flex: none;
  margin-right: 5px;
  border: 1px solid #bbb;
  background:
    linear-gradient(#5a6ea8, #5a6ea8) center / 5px 1px no-repeat,
    linear-gradient(#5a6ea8, #5a6ea8) center / 1px 5px no-repeat,
    #f4f4f4;
}
.exp.open {
  background:
    linear-gradient(#5a6ea8, #5a6ea8) center / 5px 1px no-repeat,
    #f4f4f4;
}
.t-icon {
  width: 18px;
  height: 18px;
  flex: none;
  margin-right: 1.500px;
}
.t-icon.list {
  height: 15px;
}
.t-icon.layer {
  height: 13px;
}
.t-label {
  white-space: nowrap;
  color: #333;
}
.t-label.bold {
  font-weight: 700;
  color: #111;
}
.t-gap {
  width: 18px;
  flex: none;
  border-right: 1px solid #d4d4d4;
  box-sizing: border-box;
}
.t-check {
  width: 17px;
  flex: none;
  display: flex;
  align-items: center;
  justify-content: center;
  border-right: 1px solid #d4d4d4;
  box-sizing: border-box;
}
.box {
  width: 13px;
  height: 13px;
  box-sizing: border-box;
  border: 1px solid #777;
  background: #fff;
}
.box.on {
  background: linear-gradient(#111, #111) center / 7px 7px no-repeat, #fff;
}
.t-eye {
  width: 22px;
  flex: none;
  display: flex;
  align-items: center;
  justify-content: center;
  border-right: 1px solid #d4d4d4;
  box-sizing: border-box;
}
.eye {
  width: 17px;
  height: 12px;
}
.pane-tabs {
  height: 22px;
  flex: none;
  display: flex;
  background: #fbfbfb;
}
.ptab {
  padding: 0 5px 0 6px;
  line-height: 20px;
  height: 20px;
  font-size: 11.6px;
  border-right: 1px solid #ddd;
}
.ptab.on {
  background: #7a0060;
  color: #f4d9ef;
  border: 0;
  margin-left: 1px;
}

.status {
  height: 20px;
  flex: none;
  background: #7a0060;
  color: #dfc6da;
  line-height: 20px;
  padding-left: 4px;
  font-size: 11.6px;
  border-bottom: 1px solid #2b579a;
  box-sizing: border-box;
}
</style>
